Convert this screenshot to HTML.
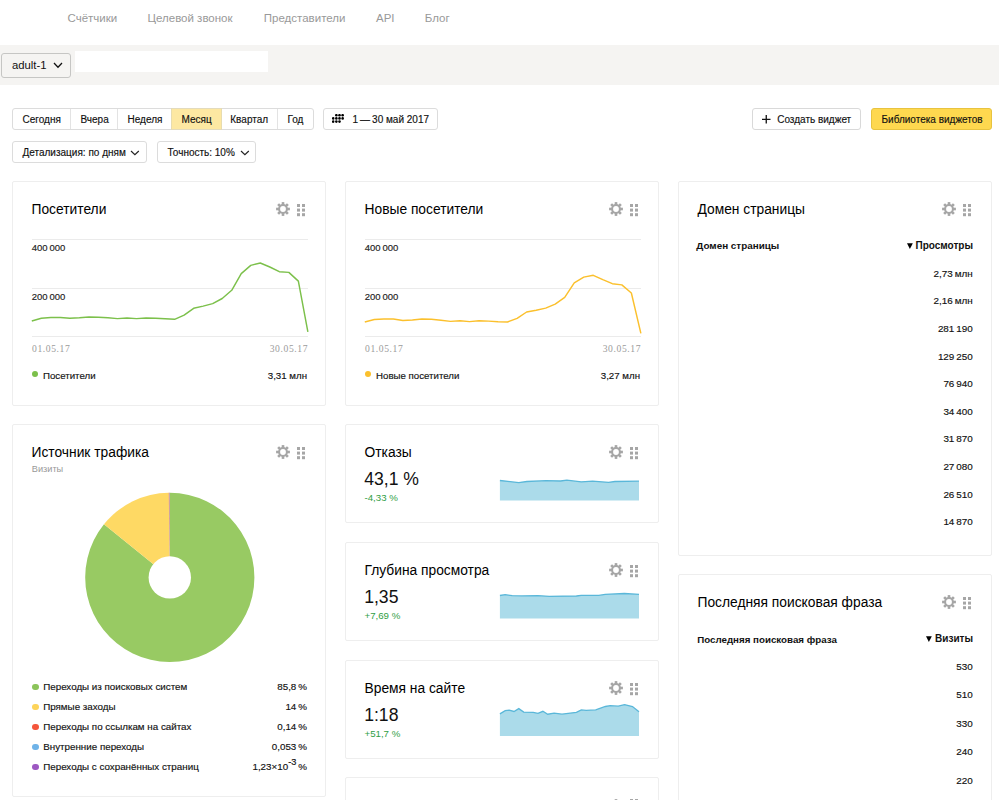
<!DOCTYPE html><html><head><meta charset="utf-8"><style>html,body{margin:0;padding:0;background:#fff;width:999px;height:800px;overflow:hidden;position:relative;}</style></head><body>
<div style="position:absolute;left:67.50px;top:12.42px;font:400 11.5px/13.80px 'Liberation Sans', sans-serif;color:#999;white-space:nowrap;">Счётчики</div>
<div style="position:absolute;left:147.50px;top:12.42px;font:400 11.5px/13.80px 'Liberation Sans', sans-serif;color:#999;white-space:nowrap;">Целевой звонок</div>
<div style="position:absolute;left:263.80px;top:12.42px;font:400 11.5px/13.80px 'Liberation Sans', sans-serif;color:#999;white-space:nowrap;">Представители</div>
<div style="position:absolute;left:376.00px;top:12.42px;font:400 11.5px/13.80px 'Liberation Sans', sans-serif;color:#999;white-space:nowrap;">API</div>
<div style="position:absolute;left:424.80px;top:12.42px;font:400 11.5px/13.80px 'Liberation Sans', sans-serif;color:#999;white-space:nowrap;">Блог</div>
<div style="position:absolute;left:0px;top:45px;width:999px;height:40px;box-sizing:border-box;background:#f5f4f2;"></div>
<div style="position:absolute;left:1px;top:53px;width:70px;height:25px;box-sizing:border-box;border:1px solid #c6c6c4;border-radius:3px;background:#f5f4f2;"></div>
<div style="position:absolute;left:12.00px;top:58.80px;font:400 11.3px/13.56px 'Liberation Sans', sans-serif;color:#111;white-space:nowrap;">adult-1</div>
<svg style="position:absolute;left:52px;top:61px" width="12" height="8.3"><path d="M2 2 L6.0 6.3 L10 2" fill="none" stroke="#111" stroke-width="1.25"/></svg>
<div style="position:absolute;left:75px;top:51px;width:193px;height:21px;box-sizing:border-box;background:#fff;"></div>
<div style="position:absolute;left:12px;top:108px;width:302px;height:22px;box-sizing:border-box;border:1px solid #dcdcdc;border-radius:3px;background:#fff;"></div>
<div style="position:absolute;left:171px;top:108px;width:51px;height:22px;box-sizing:border-box;background:#fde8a2;border:1px solid #e3dbbd;border-left-color:#e8dcae;border-right-color:#e8dcae;"></div>
<div style="position:absolute;left:70px;top:109px;width:1px;height:20px;box-sizing:border-box;background:#e3e3e3;"></div>
<div style="position:absolute;left:117px;top:109px;width:1px;height:20px;box-sizing:border-box;background:#e3e3e3;"></div>
<div style="position:absolute;left:277px;top:109px;width:1px;height:20px;box-sizing:border-box;background:#e3e3e3;"></div>
<div style="position:absolute;left:22.50px;top:114.03px;font:400 10px/12.00px 'Liberation Sans', sans-serif;color:#111;white-space:nowrap;-webkit-text-stroke:0.15px #111;">Сегодня</div>
<div style="position:absolute;left:80.50px;top:114.03px;font:400 10px/12.00px 'Liberation Sans', sans-serif;color:#111;white-space:nowrap;-webkit-text-stroke:0.15px #111;">Вчера</div>
<div style="position:absolute;left:127.50px;top:114.03px;font:400 10px/12.00px 'Liberation Sans', sans-serif;color:#111;white-space:nowrap;-webkit-text-stroke:0.15px #111;">Неделя</div>
<div style="position:absolute;left:181.50px;top:114.03px;font:400 10px/12.00px 'Liberation Sans', sans-serif;color:#111;white-space:nowrap;-webkit-text-stroke:0.15px #111;">Месяц</div>
<div style="position:absolute;left:230.30px;top:114.03px;font:400 10px/12.00px 'Liberation Sans', sans-serif;color:#111;white-space:nowrap;-webkit-text-stroke:0.15px #111;">Квартал</div>
<div style="position:absolute;left:287.50px;top:114.03px;font:400 10px/12.00px 'Liberation Sans', sans-serif;color:#111;white-space:nowrap;-webkit-text-stroke:0.15px #111;">Год</div>
<div style="position:absolute;left:323px;top:108px;width:115px;height:22px;box-sizing:border-box;border:1px solid #dcdcdc;border-radius:3px;background:#fff;"></div>
<svg style="position:absolute;left:332.4px;top:114px" width="13" height="10"><circle cx="4.35" cy="1.20" r="1.3" fill="#000"/><circle cx="7.50" cy="1.20" r="1.3" fill="#000"/><circle cx="10.65" cy="1.20" r="1.3" fill="#000"/><circle cx="1.20" cy="4.40" r="1.3" fill="#000"/><circle cx="4.35" cy="4.40" r="1.3" fill="#000"/><circle cx="7.50" cy="4.40" r="1.3" fill="#000"/><circle cx="10.65" cy="4.40" r="1.3" fill="#000"/><circle cx="1.20" cy="7.60" r="1.3" fill="#000"/><circle cx="4.35" cy="7.60" r="1.3" fill="#000"/><circle cx="7.50" cy="7.60" r="1.3" fill="#000"/></svg>
<div style="position:absolute;left:352.50px;top:114.03px;font:400 10px/12.00px 'Liberation Sans', sans-serif;color:#111;white-space:nowrap;-webkit-text-stroke:0.15px #111;">1&thinsp;—&thinsp;30 май 2017</div>
<div style="position:absolute;left:752px;top:108px;width:109px;height:22px;box-sizing:border-box;border:1px solid #d9d9d9;border-radius:3px;background:#fff;"></div>
<svg style="position:absolute;left:762px;top:115px" width="9" height="9"><path d="M0 4.3 H8.5 M4.25 0 V8.5" stroke="#111" stroke-width="1.3"/></svg>
<div style="position:absolute;left:777.20px;top:114.03px;font:400 10px/12.00px 'Liberation Sans', sans-serif;color:#111;white-space:nowrap;-webkit-text-stroke:0.15px #111;">Создать виджет</div>
<div style="position:absolute;left:871px;top:108px;width:121px;height:22px;box-sizing:border-box;border:1px solid #e8c33f;border-radius:3px;background:#fed84f;"></div>
<div style="position:absolute;left:881.50px;top:114.03px;font:400 10px/12.00px 'Liberation Sans', sans-serif;color:#111;white-space:nowrap;-webkit-text-stroke:0.15px #111;">Библиотека виджетов</div>
<div style="position:absolute;left:12px;top:141px;width:135px;height:22px;box-sizing:border-box;border:1px solid #dcdcdc;border-radius:3px;background:#fff;"></div>
<div style="position:absolute;left:22.50px;top:147.23px;font:400 10px/12.00px 'Liberation Sans', sans-serif;color:#111;white-space:nowrap;-webkit-text-stroke:0.15px #111;">Детализация: по дням</div>
<svg style="position:absolute;left:128.8px;top:148.5px" width="11.8" height="7.6"><path d="M2 2 L5.9 5.6 L9.8 2" fill="none" stroke="#222" stroke-width="1.2"/></svg>
<div style="position:absolute;left:157px;top:141px;width:99px;height:22px;box-sizing:border-box;border:1px solid #dcdcdc;border-radius:3px;background:#fff;"></div>
<div style="position:absolute;left:167.50px;top:147.23px;font:400 10px/12.00px 'Liberation Sans', sans-serif;color:#111;white-space:nowrap;-webkit-text-stroke:0.15px #111;">Точность: 10%</div>
<svg style="position:absolute;left:238.5px;top:148.5px" width="11.8" height="7.6"><path d="M2 2 L5.9 5.6 L9.8 2" fill="none" stroke="#222" stroke-width="1.2"/></svg>
<div style="position:absolute;left:12px;top:181px;width:314px;height:225px;box-sizing:border-box;border:1px solid #eeeeee;border-radius:2px;background:#fff;"></div>
<div style="position:absolute;left:31.50px;top:202.24px;font:400 13.8px/16.56px 'Liberation Sans', sans-serif;color:#000;white-space:nowrap;">Посетители</div>
<svg style="position:absolute;left:275px;top:201.2px" width="16" height="16"><g transform="translate(8 8)"><rect x="-1.3" y="-6.9" width="2.6" height="3.2" transform="rotate(0)" fill="#a6a6a6"/><rect x="-1.3" y="-6.9" width="2.6" height="3.2" transform="rotate(45)" fill="#a6a6a6"/><rect x="-1.3" y="-6.9" width="2.6" height="3.2" transform="rotate(90)" fill="#a6a6a6"/><rect x="-1.3" y="-6.9" width="2.6" height="3.2" transform="rotate(135)" fill="#a6a6a6"/><rect x="-1.3" y="-6.9" width="2.6" height="3.2" transform="rotate(180)" fill="#a6a6a6"/><rect x="-1.3" y="-6.9" width="2.6" height="3.2" transform="rotate(225)" fill="#a6a6a6"/><rect x="-1.3" y="-6.9" width="2.6" height="3.2" transform="rotate(270)" fill="#a6a6a6"/><rect x="-1.3" y="-6.9" width="2.6" height="3.2" transform="rotate(315)" fill="#a6a6a6"/><circle r="3.9" fill="none" stroke="#a6a6a6" stroke-width="2"/></g></svg>
<svg style="position:absolute;left:297px;top:203.5px" width="9" height="13"><rect x="0" y="0.0" width="3" height="3" fill="#a6a6a6"/><rect x="5" y="0.0" width="3" height="3" fill="#a6a6a6"/><rect x="0" y="4.6" width="3" height="3" fill="#a6a6a6"/><rect x="5" y="4.6" width="3" height="3" fill="#a6a6a6"/><rect x="0" y="9.2" width="3" height="3" fill="#a6a6a6"/><rect x="5" y="9.2" width="3" height="3" fill="#a6a6a6"/></svg>
<div style="position:absolute;left:32px;top:238.7px;width:276px;height:1px;box-sizing:border-box;background:#ebebeb;"></div>
<div style="position:absolute;left:32px;top:287.7px;width:276px;height:1px;box-sizing:border-box;background:#ebebeb;"></div>
<div style="position:absolute;left:32px;top:335.7px;width:276px;height:1px;box-sizing:border-box;background:#ebebeb;"></div>
<div style="position:absolute;left:31.80px;top:242.01px;font:400 9.5px/11.40px 'Liberation Sans', sans-serif;color:#222;white-space:nowrap;-webkit-text-stroke:0.15px #222;">400&thinsp;000</div>
<div style="position:absolute;left:31.80px;top:291.01px;font:400 9.5px/11.40px 'Liberation Sans', sans-serif;color:#222;white-space:nowrap;-webkit-text-stroke:0.15px #222;">200&thinsp;000</div>
<div style="position:absolute;left:32.00px;top:343.21px;font:400 9.6px/11.52px 'Liberation Serif', serif;color:#9c9c9c;white-space:nowrap;letter-spacing:0.6px;">01.05.17</div>
<div style="position:absolute;right:690.90px;top:343.21px;font:400 9.6px/11.52px 'Liberation Serif', serif;color:#9c9c9c;white-space:nowrap;letter-spacing:0.6px;">30.05.17</div>
<svg style="position:absolute;left:0;top:0" width="999" height="800"><path d="M31.80 321.00 L41.32 318.30 L50.84 317.50 L60.36 317.50 L69.88 318.30 L79.40 317.80 L88.92 317.00 L98.44 317.20 L107.96 317.80 L117.48 318.60 L127.00 318.00 L136.52 318.60 L146.04 318.00 L155.56 318.30 L165.08 318.70 L174.60 319.30 L184.12 315.20 L193.64 308.30 L203.16 306.10 L212.68 303.60 L222.20 298.50 L231.72 290.30 L241.24 273.60 L250.76 265.40 L260.28 263.00 L269.80 267.00 L279.32 271.70 L288.84 272.40 L298.36 281.10 L307.88 331.90" fill="none" stroke="#7cc04b" stroke-width="1.45" stroke-linejoin="round"/></svg>
<div style="position:absolute;left:32.4px;top:370.7px;width:6px;height:6px;border-radius:50%;background:#7cc04b;"></div>
<div style="position:absolute;left:43.00px;top:370.12px;font:400 9.7px/11.64px 'Liberation Sans', sans-serif;color:#111;white-space:nowrap;-webkit-text-stroke:0.15px #111;">Посетители</div>
<div style="position:absolute;right:692.00px;top:370.32px;font:400 9.7px/11.64px 'Liberation Sans', sans-serif;color:#111;white-space:nowrap;-webkit-text-stroke:0.15px #111;">3,31 млн</div>
<div style="position:absolute;left:345px;top:181px;width:314px;height:225px;box-sizing:border-box;border:1px solid #eeeeee;border-radius:2px;background:#fff;"></div>
<div style="position:absolute;left:364.50px;top:202.24px;font:400 13.8px/16.56px 'Liberation Sans', sans-serif;color:#000;white-space:nowrap;">Новые посетители</div>
<svg style="position:absolute;left:608px;top:201.2px" width="16" height="16"><g transform="translate(8 8)"><rect x="-1.3" y="-6.9" width="2.6" height="3.2" transform="rotate(0)" fill="#a6a6a6"/><rect x="-1.3" y="-6.9" width="2.6" height="3.2" transform="rotate(45)" fill="#a6a6a6"/><rect x="-1.3" y="-6.9" width="2.6" height="3.2" transform="rotate(90)" fill="#a6a6a6"/><rect x="-1.3" y="-6.9" width="2.6" height="3.2" transform="rotate(135)" fill="#a6a6a6"/><rect x="-1.3" y="-6.9" width="2.6" height="3.2" transform="rotate(180)" fill="#a6a6a6"/><rect x="-1.3" y="-6.9" width="2.6" height="3.2" transform="rotate(225)" fill="#a6a6a6"/><rect x="-1.3" y="-6.9" width="2.6" height="3.2" transform="rotate(270)" fill="#a6a6a6"/><rect x="-1.3" y="-6.9" width="2.6" height="3.2" transform="rotate(315)" fill="#a6a6a6"/><circle r="3.9" fill="none" stroke="#a6a6a6" stroke-width="2"/></g></svg>
<svg style="position:absolute;left:630px;top:203.5px" width="9" height="13"><rect x="0" y="0.0" width="3" height="3" fill="#a6a6a6"/><rect x="5" y="0.0" width="3" height="3" fill="#a6a6a6"/><rect x="0" y="4.6" width="3" height="3" fill="#a6a6a6"/><rect x="5" y="4.6" width="3" height="3" fill="#a6a6a6"/><rect x="0" y="9.2" width="3" height="3" fill="#a6a6a6"/><rect x="5" y="9.2" width="3" height="3" fill="#a6a6a6"/></svg>
<div style="position:absolute;left:365px;top:238.7px;width:276px;height:1px;box-sizing:border-box;background:#ebebeb;"></div>
<div style="position:absolute;left:365px;top:287.7px;width:276px;height:1px;box-sizing:border-box;background:#ebebeb;"></div>
<div style="position:absolute;left:365px;top:335.7px;width:276px;height:1px;box-sizing:border-box;background:#ebebeb;"></div>
<div style="position:absolute;left:364.80px;top:242.01px;font:400 9.5px/11.40px 'Liberation Sans', sans-serif;color:#222;white-space:nowrap;-webkit-text-stroke:0.15px #222;">400&thinsp;000</div>
<div style="position:absolute;left:364.80px;top:291.01px;font:400 9.5px/11.40px 'Liberation Sans', sans-serif;color:#222;white-space:nowrap;-webkit-text-stroke:0.15px #222;">200&thinsp;000</div>
<div style="position:absolute;left:365.00px;top:343.21px;font:400 9.6px/11.52px 'Liberation Serif', serif;color:#9c9c9c;white-space:nowrap;letter-spacing:0.6px;">01.05.17</div>
<div style="position:absolute;right:357.90px;top:343.21px;font:400 9.6px/11.52px 'Liberation Serif', serif;color:#9c9c9c;white-space:nowrap;letter-spacing:0.6px;">30.05.17</div>
<svg style="position:absolute;left:0;top:0" width="999" height="800"><path d="M364.80 322.00 L374.32 319.50 L383.84 319.00 L393.36 319.00 L402.88 320.50 L412.40 320.00 L421.92 319.00 L431.44 319.30 L440.96 320.20 L450.48 321.40 L460.00 320.70 L469.52 321.60 L479.04 320.80 L488.56 321.10 L498.08 321.70 L507.60 322.00 L517.12 318.40 L526.64 312.00 L536.16 310.20 L545.68 308.10 L555.20 304.10 L564.72 297.40 L574.24 282.90 L583.76 277.10 L593.28 275.30 L602.80 279.70 L612.32 283.70 L621.84 284.90 L631.36 293.00 L640.88 333.40" fill="none" stroke="#fbc02d" stroke-width="1.45" stroke-linejoin="round"/></svg>
<div style="position:absolute;left:365.4px;top:370.7px;width:6px;height:6px;border-radius:50%;background:#fbc02d;"></div>
<div style="position:absolute;left:376.00px;top:370.12px;font:400 9.7px/11.64px 'Liberation Sans', sans-serif;color:#111;white-space:nowrap;-webkit-text-stroke:0.15px #111;">Новые посетители</div>
<div style="position:absolute;right:359.00px;top:370.32px;font:400 9.7px/11.64px 'Liberation Sans', sans-serif;color:#111;white-space:nowrap;-webkit-text-stroke:0.15px #111;">3,27 млн</div>
<div style="position:absolute;left:678px;top:181px;width:314px;height:375px;box-sizing:border-box;border:1px solid #eeeeee;border-radius:2px;background:#fff;"></div>
<div style="position:absolute;left:697.50px;top:202.24px;font:400 13.8px/16.56px 'Liberation Sans', sans-serif;color:#000;white-space:nowrap;">Домен страницы</div>
<svg style="position:absolute;left:941px;top:201.2px" width="16" height="16"><g transform="translate(8 8)"><rect x="-1.3" y="-6.9" width="2.6" height="3.2" transform="rotate(0)" fill="#a6a6a6"/><rect x="-1.3" y="-6.9" width="2.6" height="3.2" transform="rotate(45)" fill="#a6a6a6"/><rect x="-1.3" y="-6.9" width="2.6" height="3.2" transform="rotate(90)" fill="#a6a6a6"/><rect x="-1.3" y="-6.9" width="2.6" height="3.2" transform="rotate(135)" fill="#a6a6a6"/><rect x="-1.3" y="-6.9" width="2.6" height="3.2" transform="rotate(180)" fill="#a6a6a6"/><rect x="-1.3" y="-6.9" width="2.6" height="3.2" transform="rotate(225)" fill="#a6a6a6"/><rect x="-1.3" y="-6.9" width="2.6" height="3.2" transform="rotate(270)" fill="#a6a6a6"/><rect x="-1.3" y="-6.9" width="2.6" height="3.2" transform="rotate(315)" fill="#a6a6a6"/><circle r="3.9" fill="none" stroke="#a6a6a6" stroke-width="2"/></g></svg>
<svg style="position:absolute;left:963px;top:203.5px" width="9" height="13"><rect x="0" y="0.0" width="3" height="3" fill="#a6a6a6"/><rect x="5" y="0.0" width="3" height="3" fill="#a6a6a6"/><rect x="0" y="4.6" width="3" height="3" fill="#a6a6a6"/><rect x="5" y="4.6" width="3" height="3" fill="#a6a6a6"/><rect x="0" y="9.2" width="3" height="3" fill="#a6a6a6"/><rect x="5" y="9.2" width="3" height="3" fill="#a6a6a6"/></svg>
<div style="position:absolute;left:696.30px;top:240.13px;font:700 9.9px/11.88px 'Liberation Sans', sans-serif;color:#111;white-space:nowrap;">Домен страницы</div>
<div style="position:absolute;right:26.00px;top:240.03px;font:700 10px/12.00px 'Liberation Sans', sans-serif;color:#111;white-space:nowrap;">Просмотры</div>
<svg style="position:absolute;left:907.2px;top:243px" width="6" height="6"><path d="M0 0.3 H5.8 L2.9 6 Z" fill="#000"/></svg>
<div style="position:absolute;right:26.20px;top:267.83px;font:400 9.9px/11.88px 'Liberation Sans', sans-serif;color:#111;white-space:nowrap;-webkit-text-stroke:0.15px #111;">2,73&thinsp;млн</div>
<div style="position:absolute;right:26.20px;top:295.43px;font:400 9.9px/11.88px 'Liberation Sans', sans-serif;color:#111;white-space:nowrap;-webkit-text-stroke:0.15px #111;">2,16&thinsp;млн</div>
<div style="position:absolute;right:26.20px;top:323.03px;font:400 9.9px/11.88px 'Liberation Sans', sans-serif;color:#111;white-space:nowrap;-webkit-text-stroke:0.15px #111;">281&thinsp;190</div>
<div style="position:absolute;right:26.20px;top:350.63px;font:400 9.9px/11.88px 'Liberation Sans', sans-serif;color:#111;white-space:nowrap;-webkit-text-stroke:0.15px #111;">129&thinsp;250</div>
<div style="position:absolute;right:26.20px;top:378.23px;font:400 9.9px/11.88px 'Liberation Sans', sans-serif;color:#111;white-space:nowrap;-webkit-text-stroke:0.15px #111;">76&thinsp;940</div>
<div style="position:absolute;right:26.20px;top:405.83px;font:400 9.9px/11.88px 'Liberation Sans', sans-serif;color:#111;white-space:nowrap;-webkit-text-stroke:0.15px #111;">34&thinsp;400</div>
<div style="position:absolute;right:26.20px;top:433.43px;font:400 9.9px/11.88px 'Liberation Sans', sans-serif;color:#111;white-space:nowrap;-webkit-text-stroke:0.15px #111;">31&thinsp;870</div>
<div style="position:absolute;right:26.20px;top:461.03px;font:400 9.9px/11.88px 'Liberation Sans', sans-serif;color:#111;white-space:nowrap;-webkit-text-stroke:0.15px #111;">27&thinsp;080</div>
<div style="position:absolute;right:26.20px;top:488.63px;font:400 9.9px/11.88px 'Liberation Sans', sans-serif;color:#111;white-space:nowrap;-webkit-text-stroke:0.15px #111;">26&thinsp;510</div>
<div style="position:absolute;right:26.20px;top:516.23px;font:400 9.9px/11.88px 'Liberation Sans', sans-serif;color:#111;white-space:nowrap;-webkit-text-stroke:0.15px #111;">14&thinsp;870</div>
<div style="position:absolute;left:678px;top:574px;width:314px;height:240px;box-sizing:border-box;border:1px solid #eeeeee;border-radius:2px;background:#fff;"></div>
<div style="position:absolute;left:697.50px;top:595.24px;font:400 13.8px/16.56px 'Liberation Sans', sans-serif;color:#000;white-space:nowrap;">Последняя поисковая фраза</div>
<svg style="position:absolute;left:941px;top:594.2px" width="16" height="16"><g transform="translate(8 8)"><rect x="-1.3" y="-6.9" width="2.6" height="3.2" transform="rotate(0)" fill="#a6a6a6"/><rect x="-1.3" y="-6.9" width="2.6" height="3.2" transform="rotate(45)" fill="#a6a6a6"/><rect x="-1.3" y="-6.9" width="2.6" height="3.2" transform="rotate(90)" fill="#a6a6a6"/><rect x="-1.3" y="-6.9" width="2.6" height="3.2" transform="rotate(135)" fill="#a6a6a6"/><rect x="-1.3" y="-6.9" width="2.6" height="3.2" transform="rotate(180)" fill="#a6a6a6"/><rect x="-1.3" y="-6.9" width="2.6" height="3.2" transform="rotate(225)" fill="#a6a6a6"/><rect x="-1.3" y="-6.9" width="2.6" height="3.2" transform="rotate(270)" fill="#a6a6a6"/><rect x="-1.3" y="-6.9" width="2.6" height="3.2" transform="rotate(315)" fill="#a6a6a6"/><circle r="3.9" fill="none" stroke="#a6a6a6" stroke-width="2"/></g></svg>
<svg style="position:absolute;left:963px;top:596.5px" width="9" height="13"><rect x="0" y="0.0" width="3" height="3" fill="#a6a6a6"/><rect x="5" y="0.0" width="3" height="3" fill="#a6a6a6"/><rect x="0" y="4.6" width="3" height="3" fill="#a6a6a6"/><rect x="5" y="4.6" width="3" height="3" fill="#a6a6a6"/><rect x="0" y="9.2" width="3" height="3" fill="#a6a6a6"/><rect x="5" y="9.2" width="3" height="3" fill="#a6a6a6"/></svg>
<div style="position:absolute;left:697.20px;top:633.57px;font:700 9.75px/11.70px 'Liberation Sans', sans-serif;color:#111;white-space:nowrap;">Последняя поисковая фраза</div>
<div style="position:absolute;right:26.00px;top:633.34px;font:700 10px/12.00px 'Liberation Sans', sans-serif;color:#111;white-space:nowrap;">Визиты</div>
<svg style="position:absolute;left:925.8px;top:636.4px" width="6" height="6"><path d="M0 0.3 H5.8 L2.9 6 Z" fill="#000"/></svg>
<div style="position:absolute;right:26.20px;top:660.73px;font:400 9.9px/11.88px 'Liberation Sans', sans-serif;color:#111;white-space:nowrap;-webkit-text-stroke:0.15px #111;">530</div>
<div style="position:absolute;right:26.20px;top:689.23px;font:400 9.9px/11.88px 'Liberation Sans', sans-serif;color:#111;white-space:nowrap;-webkit-text-stroke:0.15px #111;">510</div>
<div style="position:absolute;right:26.20px;top:717.73px;font:400 9.9px/11.88px 'Liberation Sans', sans-serif;color:#111;white-space:nowrap;-webkit-text-stroke:0.15px #111;">330</div>
<div style="position:absolute;right:26.20px;top:746.23px;font:400 9.9px/11.88px 'Liberation Sans', sans-serif;color:#111;white-space:nowrap;-webkit-text-stroke:0.15px #111;">240</div>
<div style="position:absolute;right:26.20px;top:774.73px;font:400 9.9px/11.88px 'Liberation Sans', sans-serif;color:#111;white-space:nowrap;-webkit-text-stroke:0.15px #111;">220</div>
<div style="position:absolute;left:12px;top:424px;width:314px;height:373px;box-sizing:border-box;border:1px solid #eeeeee;border-radius:2px;background:#fff;"></div>
<div style="position:absolute;left:31.50px;top:445.24px;font:400 13.8px/16.56px 'Liberation Sans', sans-serif;color:#000;white-space:nowrap;">Источник трафика</div>
<svg style="position:absolute;left:275px;top:444.2px" width="16" height="16"><g transform="translate(8 8)"><rect x="-1.3" y="-6.9" width="2.6" height="3.2" transform="rotate(0)" fill="#a6a6a6"/><rect x="-1.3" y="-6.9" width="2.6" height="3.2" transform="rotate(45)" fill="#a6a6a6"/><rect x="-1.3" y="-6.9" width="2.6" height="3.2" transform="rotate(90)" fill="#a6a6a6"/><rect x="-1.3" y="-6.9" width="2.6" height="3.2" transform="rotate(135)" fill="#a6a6a6"/><rect x="-1.3" y="-6.9" width="2.6" height="3.2" transform="rotate(180)" fill="#a6a6a6"/><rect x="-1.3" y="-6.9" width="2.6" height="3.2" transform="rotate(225)" fill="#a6a6a6"/><rect x="-1.3" y="-6.9" width="2.6" height="3.2" transform="rotate(270)" fill="#a6a6a6"/><rect x="-1.3" y="-6.9" width="2.6" height="3.2" transform="rotate(315)" fill="#a6a6a6"/><circle r="3.9" fill="none" stroke="#a6a6a6" stroke-width="2"/></g></svg>
<svg style="position:absolute;left:297px;top:446.5px" width="9" height="13"><rect x="0" y="0.0" width="3" height="3" fill="#a6a6a6"/><rect x="5" y="0.0" width="3" height="3" fill="#a6a6a6"/><rect x="0" y="4.6" width="3" height="3" fill="#a6a6a6"/><rect x="5" y="4.6" width="3" height="3" fill="#a6a6a6"/><rect x="0" y="9.2" width="3" height="3" fill="#a6a6a6"/><rect x="5" y="9.2" width="3" height="3" fill="#a6a6a6"/></svg>
<div style="position:absolute;left:31.80px;top:463.89px;font:400 9.2px/11.04px 'Liberation Sans', sans-serif;color:#999;white-space:nowrap;">Визиты</div>
<svg style="position:absolute;left:0;top:0" width="999" height="800"><path d="M169.8 577.4 L169.800 492.800 A84.6 84.6 0 1 1 103.959 524.277 Z" fill="#98ca63"/><path d="M169.8 577.4 L103.959 524.277 A84.6 84.6 0 0 1 168.768 492.806 Z" fill="#fed964"/><path d="M169.8 577.4 L168.768 492.806 A84.6 84.6 0 0 1 169.512 492.800 Z" fill="#f25c44"/><path d="M169.8 577.4 L169.512 492.800 A84.6 84.6 0 0 1 169.793 492.800 Z" fill="#6db3e6"/><path d="M169.8 577.4 L169.793 492.800 A84.6 84.6 0 0 1 169.800 492.800 Z" fill="#a05fc4"/><circle cx="169.8" cy="577.4" r="21.2" fill="#fff"/></svg>
<div style="position:absolute;left:32.4px;top:684.10px;width:6.2px;height:6.2px;border-radius:50%;background:#8cc45a;"></div>
<div style="position:absolute;left:43.20px;top:681.32px;font:400 9.8px/11.76px 'Liberation Sans', sans-serif;color:#111;white-space:nowrap;-webkit-text-stroke:0.15px #111;">Переходы из поисковых систем</div>
<div style="position:absolute;right:692.00px;top:681.32px;font:400 9.8px/11.76px 'Liberation Sans', sans-serif;color:#111;white-space:nowrap;-webkit-text-stroke:0.15px #111;">85,8&thinsp;%</div>
<div style="position:absolute;left:32.4px;top:704.05px;width:6.2px;height:6.2px;border-radius:50%;background:#fdd45a;"></div>
<div style="position:absolute;left:43.20px;top:701.27px;font:400 9.8px/11.76px 'Liberation Sans', sans-serif;color:#111;white-space:nowrap;-webkit-text-stroke:0.15px #111;">Прямые заходы</div>
<div style="position:absolute;right:692.00px;top:701.27px;font:400 9.8px/11.76px 'Liberation Sans', sans-serif;color:#111;white-space:nowrap;-webkit-text-stroke:0.15px #111;">14&thinsp;%</div>
<div style="position:absolute;left:32.4px;top:724.00px;width:6.2px;height:6.2px;border-radius:50%;background:#f4553b;"></div>
<div style="position:absolute;left:43.20px;top:721.22px;font:400 9.8px/11.76px 'Liberation Sans', sans-serif;color:#111;white-space:nowrap;-webkit-text-stroke:0.15px #111;">Переходы по ссылкам на сайтах</div>
<div style="position:absolute;right:692.00px;top:721.22px;font:400 9.8px/11.76px 'Liberation Sans', sans-serif;color:#111;white-space:nowrap;-webkit-text-stroke:0.15px #111;">0,14&thinsp;%</div>
<div style="position:absolute;left:32.4px;top:743.95px;width:6.2px;height:6.2px;border-radius:50%;background:#6fb3e8;"></div>
<div style="position:absolute;left:43.20px;top:741.17px;font:400 9.8px/11.76px 'Liberation Sans', sans-serif;color:#111;white-space:nowrap;-webkit-text-stroke:0.15px #111;">Внутренние переходы</div>
<div style="position:absolute;right:692.00px;top:741.17px;font:400 9.8px/11.76px 'Liberation Sans', sans-serif;color:#111;white-space:nowrap;-webkit-text-stroke:0.15px #111;">0,053&thinsp;%</div>
<div style="position:absolute;left:32.4px;top:763.90px;width:6.2px;height:6.2px;border-radius:50%;background:#9d58c2;"></div>
<div style="position:absolute;left:43.20px;top:761.12px;font:400 9.8px/11.76px 'Liberation Sans', sans-serif;color:#111;white-space:nowrap;-webkit-text-stroke:0.15px #111;">Переходы с сохранённых страниц</div>
<div style="position:absolute;right:692.00px;top:761.12px;font:400 9.8px/11.76px 'Liberation Sans', sans-serif;color:#111;white-space:nowrap;-webkit-text-stroke:0.15px #111;">1,23×10<sup style="font-size:9.2px;vertical-align:4.6px;line-height:0">-3</sup>&thinsp;%</div>
<div style="position:absolute;left:345px;top:424px;width:314px;height:99px;box-sizing:border-box;border:1px solid #eeeeee;border-radius:2px;background:#fff;"></div>
<div style="position:absolute;left:364.50px;top:445.24px;font:400 13.8px/16.56px 'Liberation Sans', sans-serif;color:#000;white-space:nowrap;">Отказы</div>
<svg style="position:absolute;left:608px;top:444.2px" width="16" height="16"><g transform="translate(8 8)"><rect x="-1.3" y="-6.9" width="2.6" height="3.2" transform="rotate(0)" fill="#a6a6a6"/><rect x="-1.3" y="-6.9" width="2.6" height="3.2" transform="rotate(45)" fill="#a6a6a6"/><rect x="-1.3" y="-6.9" width="2.6" height="3.2" transform="rotate(90)" fill="#a6a6a6"/><rect x="-1.3" y="-6.9" width="2.6" height="3.2" transform="rotate(135)" fill="#a6a6a6"/><rect x="-1.3" y="-6.9" width="2.6" height="3.2" transform="rotate(180)" fill="#a6a6a6"/><rect x="-1.3" y="-6.9" width="2.6" height="3.2" transform="rotate(225)" fill="#a6a6a6"/><rect x="-1.3" y="-6.9" width="2.6" height="3.2" transform="rotate(270)" fill="#a6a6a6"/><rect x="-1.3" y="-6.9" width="2.6" height="3.2" transform="rotate(315)" fill="#a6a6a6"/><circle r="3.9" fill="none" stroke="#a6a6a6" stroke-width="2"/></g></svg>
<svg style="position:absolute;left:630px;top:446.5px" width="9" height="13"><rect x="0" y="0.0" width="3" height="3" fill="#a6a6a6"/><rect x="5" y="0.0" width="3" height="3" fill="#a6a6a6"/><rect x="0" y="4.6" width="3" height="3" fill="#a6a6a6"/><rect x="5" y="4.6" width="3" height="3" fill="#a6a6a6"/><rect x="0" y="9.2" width="3" height="3" fill="#a6a6a6"/><rect x="5" y="9.2" width="3" height="3" fill="#a6a6a6"/></svg>
<div style="position:absolute;left:364.20px;top:468.74px;font:400 17.6px/21.12px 'Liberation Sans', sans-serif;color:#111;white-space:nowrap;">43,1 %</div>
<div style="position:absolute;left:364.50px;top:492.02px;font:400 9.7px/11.64px 'Liberation Sans', sans-serif;color:#2f9e44;white-space:nowrap;">-4,33 %</div>
<svg style="position:absolute;left:0;top:0" width="999" height="800"><path d="M499.90 480.50 L518.80 482.60 L526.90 481.50 L545.90 480.70 L560.50 481.00 L566.90 480.20 L581.30 481.80 L592.60 481.20 L608.60 482.30 L614.90 481.50 L639.00 481.20 L639.00 500.4 L499.9 500.4 Z" fill="#abdbea"/><path d="M499.90 480.50 L518.80 482.60 L526.90 481.50 L545.90 480.70 L560.50 481.00 L566.90 480.20 L581.30 481.80 L592.60 481.20 L608.60 482.30 L614.90 481.50 L639.00 481.20" fill="none" stroke="#5ab7d9" stroke-width="1.3"/></svg>
<div style="position:absolute;left:345px;top:542px;width:314px;height:99px;box-sizing:border-box;border:1px solid #eeeeee;border-radius:2px;background:#fff;"></div>
<div style="position:absolute;left:364.50px;top:563.24px;font:400 13.8px/16.56px 'Liberation Sans', sans-serif;color:#000;white-space:nowrap;">Глубина просмотра</div>
<svg style="position:absolute;left:608px;top:562.2px" width="16" height="16"><g transform="translate(8 8)"><rect x="-1.3" y="-6.9" width="2.6" height="3.2" transform="rotate(0)" fill="#a6a6a6"/><rect x="-1.3" y="-6.9" width="2.6" height="3.2" transform="rotate(45)" fill="#a6a6a6"/><rect x="-1.3" y="-6.9" width="2.6" height="3.2" transform="rotate(90)" fill="#a6a6a6"/><rect x="-1.3" y="-6.9" width="2.6" height="3.2" transform="rotate(135)" fill="#a6a6a6"/><rect x="-1.3" y="-6.9" width="2.6" height="3.2" transform="rotate(180)" fill="#a6a6a6"/><rect x="-1.3" y="-6.9" width="2.6" height="3.2" transform="rotate(225)" fill="#a6a6a6"/><rect x="-1.3" y="-6.9" width="2.6" height="3.2" transform="rotate(270)" fill="#a6a6a6"/><rect x="-1.3" y="-6.9" width="2.6" height="3.2" transform="rotate(315)" fill="#a6a6a6"/><circle r="3.9" fill="none" stroke="#a6a6a6" stroke-width="2"/></g></svg>
<svg style="position:absolute;left:630px;top:564.5px" width="9" height="13"><rect x="0" y="0.0" width="3" height="3" fill="#a6a6a6"/><rect x="5" y="0.0" width="3" height="3" fill="#a6a6a6"/><rect x="0" y="4.6" width="3" height="3" fill="#a6a6a6"/><rect x="5" y="4.6" width="3" height="3" fill="#a6a6a6"/><rect x="0" y="9.2" width="3" height="3" fill="#a6a6a6"/><rect x="5" y="9.2" width="3" height="3" fill="#a6a6a6"/></svg>
<div style="position:absolute;left:364.20px;top:586.74px;font:400 17.6px/21.12px 'Liberation Sans', sans-serif;color:#111;white-space:nowrap;">1,35</div>
<div style="position:absolute;left:364.50px;top:610.02px;font:400 9.7px/11.64px 'Liberation Sans', sans-serif;color:#2f9e44;white-space:nowrap;">+7,69 %</div>
<svg style="position:absolute;left:0;top:0" width="999" height="800"><path d="M499.90 595.50 L505.20 594.70 L512.20 595.60 L521.90 595.90 L537.90 595.60 L549.20 596.30 L576.40 596.00 L581.20 595.40 L598.80 595.40 L605.20 594.40 L624.40 593.50 L639.00 594.40 L639.00 618.6 L499.9 618.6 Z" fill="#abdbea"/><path d="M499.90 595.50 L505.20 594.70 L512.20 595.60 L521.90 595.90 L537.90 595.60 L549.20 596.30 L576.40 596.00 L581.20 595.40 L598.80 595.40 L605.20 594.40 L624.40 593.50 L639.00 594.40" fill="none" stroke="#5ab7d9" stroke-width="1.3"/></svg>
<div style="position:absolute;left:345px;top:660px;width:314px;height:99px;box-sizing:border-box;border:1px solid #eeeeee;border-radius:2px;background:#fff;"></div>
<div style="position:absolute;left:364.50px;top:681.24px;font:400 13.8px/16.56px 'Liberation Sans', sans-serif;color:#000;white-space:nowrap;">Время на сайте</div>
<svg style="position:absolute;left:608px;top:680.2px" width="16" height="16"><g transform="translate(8 8)"><rect x="-1.3" y="-6.9" width="2.6" height="3.2" transform="rotate(0)" fill="#a6a6a6"/><rect x="-1.3" y="-6.9" width="2.6" height="3.2" transform="rotate(45)" fill="#a6a6a6"/><rect x="-1.3" y="-6.9" width="2.6" height="3.2" transform="rotate(90)" fill="#a6a6a6"/><rect x="-1.3" y="-6.9" width="2.6" height="3.2" transform="rotate(135)" fill="#a6a6a6"/><rect x="-1.3" y="-6.9" width="2.6" height="3.2" transform="rotate(180)" fill="#a6a6a6"/><rect x="-1.3" y="-6.9" width="2.6" height="3.2" transform="rotate(225)" fill="#a6a6a6"/><rect x="-1.3" y="-6.9" width="2.6" height="3.2" transform="rotate(270)" fill="#a6a6a6"/><rect x="-1.3" y="-6.9" width="2.6" height="3.2" transform="rotate(315)" fill="#a6a6a6"/><circle r="3.9" fill="none" stroke="#a6a6a6" stroke-width="2"/></g></svg>
<svg style="position:absolute;left:630px;top:682.5px" width="9" height="13"><rect x="0" y="0.0" width="3" height="3" fill="#a6a6a6"/><rect x="5" y="0.0" width="3" height="3" fill="#a6a6a6"/><rect x="0" y="4.6" width="3" height="3" fill="#a6a6a6"/><rect x="5" y="4.6" width="3" height="3" fill="#a6a6a6"/><rect x="0" y="9.2" width="3" height="3" fill="#a6a6a6"/><rect x="5" y="9.2" width="3" height="3" fill="#a6a6a6"/></svg>
<div style="position:absolute;left:364.20px;top:704.74px;font:400 17.6px/21.12px 'Liberation Sans', sans-serif;color:#111;white-space:nowrap;">1:18</div>
<div style="position:absolute;left:364.50px;top:728.02px;font:400 9.7px/11.64px 'Liberation Sans', sans-serif;color:#2f9e44;white-space:nowrap;">+51,7 %</div>
<svg style="position:absolute;left:0;top:0" width="999" height="800"><path d="M499.90 713.90 L505.20 710.70 L509.20 710.20 L514.00 711.50 L518.80 708.60 L523.70 712.10 L533.20 712.30 L538.00 713.40 L542.90 711.30 L547.70 714.20 L554.10 713.10 L562.00 714.20 L576.40 712.30 L581.30 709.90 L586.10 710.40 L595.70 709.90 L605.40 706.50 L610.20 705.70 L618.20 706.20 L624.60 704.60 L632.50 706.50 L639.00 711.80 L639.00 736 L499.9 736 Z" fill="#abdbea"/><path d="M499.90 713.90 L505.20 710.70 L509.20 710.20 L514.00 711.50 L518.80 708.60 L523.70 712.10 L533.20 712.30 L538.00 713.40 L542.90 711.30 L547.70 714.20 L554.10 713.10 L562.00 714.20 L576.40 712.30 L581.30 709.90 L586.10 710.40 L595.70 709.90 L605.40 706.50 L610.20 705.70 L618.20 706.20 L624.60 704.60 L632.50 706.50 L639.00 711.80" fill="none" stroke="#5ab7d9" stroke-width="1.3"/></svg>
<div style="position:absolute;left:345px;top:777px;width:314px;height:60px;box-sizing:border-box;border:1px solid #eeeeee;border-radius:2px;background:#fff;"></div>
<svg style="position:absolute;left:608px;top:797.6px" width="16" height="16"><g transform="translate(8 8)"><rect x="-1.3" y="-6.9" width="2.6" height="3.2" transform="rotate(0)" fill="#a6a6a6"/><rect x="-1.3" y="-6.9" width="2.6" height="3.2" transform="rotate(45)" fill="#a6a6a6"/><rect x="-1.3" y="-6.9" width="2.6" height="3.2" transform="rotate(90)" fill="#a6a6a6"/><rect x="-1.3" y="-6.9" width="2.6" height="3.2" transform="rotate(135)" fill="#a6a6a6"/><rect x="-1.3" y="-6.9" width="2.6" height="3.2" transform="rotate(180)" fill="#a6a6a6"/><rect x="-1.3" y="-6.9" width="2.6" height="3.2" transform="rotate(225)" fill="#a6a6a6"/><rect x="-1.3" y="-6.9" width="2.6" height="3.2" transform="rotate(270)" fill="#a6a6a6"/><rect x="-1.3" y="-6.9" width="2.6" height="3.2" transform="rotate(315)" fill="#a6a6a6"/><circle r="3.9" fill="none" stroke="#a6a6a6" stroke-width="2"/></g></svg>
<svg style="position:absolute;left:630px;top:798.8px" width="9" height="13"><rect x="0" y="0.0" width="3" height="3" fill="#a6a6a6"/><rect x="5" y="0.0" width="3" height="3" fill="#a6a6a6"/><rect x="0" y="4.6" width="3" height="3" fill="#a6a6a6"/><rect x="5" y="4.6" width="3" height="3" fill="#a6a6a6"/><rect x="0" y="9.2" width="3" height="3" fill="#a6a6a6"/><rect x="5" y="9.2" width="3" height="3" fill="#a6a6a6"/></svg>
</body></html>
